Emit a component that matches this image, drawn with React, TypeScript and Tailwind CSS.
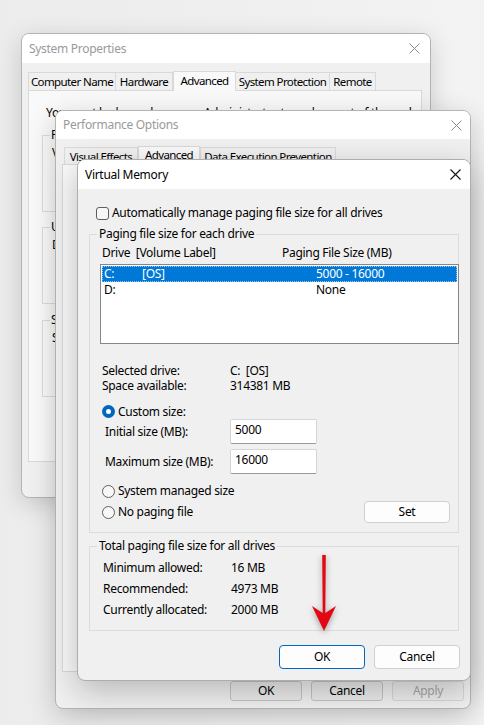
import React from "react";

const FONT = "font-['Noto_Sans','Segoe_UI',sans-serif] tracking-[-0.3px]";

function CloseX({ active }: { active?: boolean }) {
  return (
    <svg width="11" height="11" viewBox="0 0 11 11" className="shrink-0">
      <path
        d="M0.5 0.5 L10.5 10.5 M10.5 0.5 L0.5 10.5"
        stroke={active ? "#1a1a1a" : "#8c8c8c"}
        strokeWidth={active ? 1.2 : 1}
        fill="none"
      />
    </svg>
  );
}

function Radio({ checked }: { checked?: boolean }) {
  if (checked) {
    return (
      <span className="w-[13px] h-[13px] rounded-full bg-[#0067c0] flex items-center justify-center shrink-0">
        <span className="w-[5px] h-[5px] rounded-full bg-white" />
      </span>
    );
  }
  return <span className="w-[13px] h-[13px] rounded-full border border-[#5f5f5f] bg-[#f7f7f7] shrink-0" />;
}

function Legend({ children }: { children: React.ReactNode }) {
  return (
    <span className="absolute -top-[9px] left-[7px] px-[2px] bg-[#f0f0f0] leading-[16px] whitespace-nowrap">{children}</span>
  );
}

function SystemProperties() {
  const tabs = [
    { t: "Computer Name", w: "w-[88px]" },
    { t: "Hardware", w: "w-[58px]" },
    { t: "Advanced", w: "w-[63px]", sel: true },
    { t: "System Protection", w: "w-[95px]" },
    { t: "Remote", w: "w-[47px]" },
  ];
  return (
    <div className="absolute z-10 left-[21px] top-[33px] w-[410px] h-[465px] rounded-[8px] border border-[#b4b4b4] bg-[#f0f0f0] shadow-[0_6px_24px_rgba(0,0,0,0.16)] overflow-hidden flex flex-col">
      <div className="h-[29px] bg-white flex items-center justify-between pl-[7px] pr-[10px] text-[#9a9a9a] shrink-0">
        <span>System Properties</span>
        <CloseX />
      </div>
      <div className="pl-[6px] pt-[7px] flex flex-col">
        <div className="flex items-end h-[20px] text-[11.5px] tracking-[-0.6px]">
          {tabs.map((t) =>
            t.sel ? (
              <div
                key={t.t}
                className={`${t.w} h-[20px] -mb-px z-10 border border-b-0 border-[#d9d9d9] bg-[#f9f9f9] flex items-center justify-center leading-[16px] whitespace-nowrap pb-[2px]`}
              >
                {t.t}
              </div>
            ) : (
              <div
                key={t.t}
                className={`${t.w} h-[18px] border border-b-0 border-[#d9d9d9] -ml-px first:ml-0 bg-[#f0f0f0] flex items-center justify-center leading-[16px] whitespace-nowrap`}
              >
                {t.t}
              </div>
            )
          )}
        </div>
        <div className="w-[394px] h-[372px] border border-[#d9d9d9] bg-[#f9f9f9] flex flex-col pl-[13px]">
          <div className="pt-[14px] pl-[4px] leading-[16px] whitespace-nowrap">
            You must be logged on as an Administrator to make most of these changes.
          </div>
          {[
            { l: "Performance", d: "Visual effects, processor scheduling, memory usage, and virtual memory", mt: "mt-[14px]" },
            { l: "User Profiles", d: "Desktop settings related to your sign-in", mt: "mt-[15px]" },
            { l: "Startup and Recovery", d: "System startup, system failure, and debugging information", mt: "mt-[16px]" },
          ].map((g) => (
            <div key={g.l} className={`relative ${g.mt} w-[366px] h-[77px] border border-[#dcdcdc] flex flex-col`}>
              <span className="absolute -top-[9px] left-[7px] px-[1px] bg-[#f9f9f9] leading-[16px] whitespace-nowrap">{g.l}</span>
              <div className="pl-[9px] pt-[9px] leading-[16px] whitespace-nowrap">{g.d}</div>
              <div className="mt-auto mb-[8px] mr-[8px] self-end w-[75px] h-[22px] rounded-[4px] border border-[#d0d0d0] bg-[#fdfdfd] flex items-center justify-center">
                Settings...
              </div>
            </div>
          ))}
        </div>
      </div>
    </div>
  );
}

function PerformanceOptions() {
  return (
    <div className="absolute z-20 left-[55px] top-[110px] w-[416px] h-[599px] rounded-[8px] border border-[#b4b4b4] bg-[#f0f0f0] shadow-[0_8px_28px_rgba(0,0,0,0.2)] overflow-hidden flex flex-col">
      <div className="h-[28px] bg-white flex items-center justify-between pl-[7px] pr-[8px] text-[#9a9a9a] shrink-0">
        <span>Performance Options</span>
        <CloseX />
      </div>
      <div className="pl-[6px] pt-[7px] flex flex-col">
        <div className="flex items-end h-[18px] ml-[2px] text-[11.5px] tracking-[-0.6px]">
          <div className="w-[74px] h-[17px] border border-b-0 border-[#d9d9d9] bg-[#f0f0f0] flex items-start justify-center leading-[16px] whitespace-nowrap pt-[1px]">
            Visual Effects
          </div>
          <div className="w-[62px] h-[19px] -mb-px z-10 border border-b-0 border-[#d9d9d9] bg-[#f9f9f9] flex items-start justify-center leading-[16px] whitespace-nowrap">
            Advanced
          </div>
          <div className="w-[136px] h-[17px] border border-b-0 border-[#d9d9d9] bg-[#f0f0f0] flex items-start justify-center leading-[16px] whitespace-nowrap pt-[1px]">
            Data Execution Prevention
          </div>
        </div>
        <div className="w-[402px] h-[508px] border border-[#d9d9d9] bg-[#f9f9f9]" />
        <div className="flex justify-end gap-[9px] mt-[9px] pr-[6px]">
          <div className="w-[72px] h-[20px] rounded-[3px] border border-[#c4c4c4] bg-[#ebebeb] flex items-center justify-center">OK</div>
          <div className="w-[72px] h-[20px] rounded-[3px] border border-[#c4c4c4] bg-[#ebebeb] flex items-center justify-center">Cancel</div>
          <div className="w-[72px] h-[20px] rounded-[3px] border border-[#d6d6d6] bg-[#ededed] text-[#a6a6a6] flex items-center justify-center">Apply</div>
        </div>
      </div>
    </div>
  );
}

function VirtualMemory() {
  return (
    <div className="absolute z-30 left-[77px] top-[159px] w-[394px] h-[522px] rounded-[8px] border border-[#adadad] bg-[#f0f0f0] shadow-[0_10px_32px_rgba(0,0,0,0.24)] overflow-hidden flex flex-col text-black">
      <div className="h-[29px] bg-white flex items-center justify-between pl-[7px] pr-[9px] shrink-0">
        <span>Virtual Memory</span>
        <CloseX active />
      </div>
      <div className="flex flex-col px-[11px]">
        {/* auto manage checkbox */}
        <div className="mt-[16px] h-[16px] flex items-center pl-[7px] gap-[3px]">
          <span className="w-[13px] h-[13px] rounded-[3px] border border-[#5f5f5f] bg-[#f7f7f7] shrink-0" />
          <span className="leading-[16px]">Automatically manage paging file size for all drives</span>
        </div>

        {/* Paging file size group */}
        <div className="relative mt-[13px] h-[299px] border border-[#dcdcdc] flex flex-col pl-[10px]">
          <Legend>Paging file size for each drive</Legend>
          <div className="mt-[10px] h-[16px] flex leading-[16px] pl-[2px]">
            <span className="w-[180px] whitespace-pre">Drive  [Volume Label]</span>
            <span>Paging File Size (MB)</span>
          </div>
          <div className="mt-[3px] -mr-px h-[80px] border border-[#828790] bg-white p-[1px] flex flex-col">
            <div className="h-[16px] bg-[#0078d7] text-white flex items-center outline outline-1 outline-dotted outline-[#9cc8ee] -outline-offset-1 leading-[16px]">
              <span className="pl-[2px] w-[40px]">C:</span>
              <span className="w-[174px]">[OS]</span>
              <span>5000 - 16000</span>
            </div>
            <div className="h-[16px] flex items-center leading-[16px]">
              <span className="pl-[2px] w-[214px]">D:</span>
              <span>None</span>
            </div>
          </div>

          <div className="mt-[19px] flex flex-col leading-[15px] pl-[2px]">
            <div className="flex">
              <span className="w-[128px]">Selected drive:</span>
              <span className="whitespace-pre">C:  [OS]</span>
            </div>
            <div className="flex">
              <span className="w-[128px]">Space available:</span>
              <span>314381 MB</span>
            </div>
          </div>

          <div className="mt-[11px] h-[15px] flex items-center gap-[3px] pl-[2px]">
            <Radio checked />
            <span className="leading-[15px]">Custom size:</span>
          </div>
          <div className="flex items-center h-[25px] pl-[5px]">
            <span className="w-[125px] leading-[16px]">Initial size (MB):</span>
            <div className="w-[87px] h-[25px] rounded-[2px] border border-[#d6d6d6] border-b-[#9a9a9a] bg-white pl-[4px] pt-[2px] leading-[16px]">
              5000
            </div>
          </div>
          <div className="mt-[5px] flex items-center h-[25px] pl-[5px]">
            <span className="w-[125px] leading-[16px]">Maximum size (MB):</span>
            <div className="w-[87px] h-[25px] rounded-[2px] border border-[#d6d6d6] border-b-[#9a9a9a] bg-white pl-[4px] pt-[2px] leading-[16px]">
              16000
            </div>
          </div>
          <div className="mt-[9px] h-[16px] flex items-center gap-[3px] pl-[2px]">
            <Radio />
            <span className="leading-[16px]">System managed size</span>
          </div>
          <div className="mt-[2px] h-[22px] flex items-center pl-[2px] pr-[8px]">
            <Radio />
            <span className="ml-[3px] leading-[16px]">No paging file</span>
            <div className="ml-auto w-[86px] h-[22px] rounded-[4px] border border-[#d0d0d0] bg-[#fdfdfd] flex items-center justify-center">
              Set
            </div>
          </div>
        </div>

        {/* Totals group */}
        <div className="relative mt-[13px] h-[85px] border border-[#dcdcdc] flex flex-col pl-[13px] pt-[10px]">
          <Legend>Total paging file size for all drives</Legend>
          {[
            ["Minimum allowed:", "16 MB"],
            ["Recommended:", "4973 MB"],
            ["Currently allocated:", "2000 MB"],
          ].map(([l, v]) => (
            <div key={l} className="flex leading-[21px]">
              <span className="w-[128px]">{l}</span>
              <span>{v}</span>
            </div>
          ))}
        </div>

        {/* buttons */}
        <div className="mt-[14px] -mr-px flex justify-end gap-[9px]">
          <div className="w-[86px] h-[24px] rounded-[4px] border-[1.5px] border-[#0067c0] bg-[#fdfdfd] flex items-center justify-center">
            OK
          </div>
          <div className="w-[86px] h-[24px] rounded-[4px] border border-[#d0d0d0] bg-[#fdfdfd] flex items-center justify-center">
            Cancel
          </div>
        </div>
      </div>
    </div>
  );
}

function RedArrow() {
  return (
    <svg
      className="absolute z-40 left-[308px] top-[552px] drop-shadow-[0_2px_3px_rgba(0,0,0,0.35)]"
      width="32"
      height="84"
      viewBox="0 0 32 84"
    >
      <path d="M14.2 3 L17.8 3 L17.3 61 L28 54 L16 79 L4 54 L14.7 61 Z" fill="#e30613" />
    </svg>
  );
}

export default function App() {
  return (
    <div
      className={`${FONT} relative w-[484px] h-[725px] overflow-hidden bg-[linear-gradient(90deg,#ececec,#f3f3f3)] text-[12px] text-black`}
    >
      <SystemProperties />
      <PerformanceOptions />
      <VirtualMemory />
      <RedArrow />
    </div>
  );
}
